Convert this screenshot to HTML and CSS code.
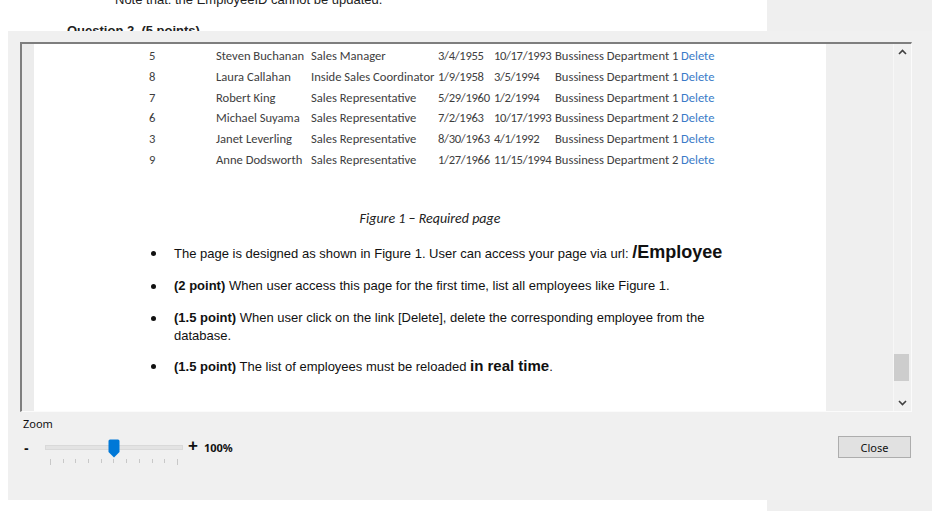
FILE: index.html
```html
<!DOCTYPE html>
<html>
<head>
<meta charset="utf-8">
<link rel="stylesheet" href="styles.css">
</head>
<body>
<div class="backdrop">
  <div class="doc">
    <p class="note">Note that: the EmployeeID cannot be updated.</p>
    <p class="question">Question 2. (5 points)</p>
  </div>
  <div class="side"></div>
</div>
<div class="dialog">
  <div class="viewer">
    <div class="gutter"></div>
    <div class="paper">
      <div class="emp-table">
        <div class="row"><span class="c-id">5</span><span class="c-name">Steven Buchanan</span><span class="c-title">Sales Manager</span><span class="c-birth">3/4/1955</span><span class="c-hire">10/17/1993</span><span class="c-dept">Bussiness Department 1</span><a class="c-del">Delete</a></div>
        <div class="row"><span class="c-id">8</span><span class="c-name">Laura Callahan</span><span class="c-title">Inside Sales Coordinator</span><span class="c-birth">1/9/1958</span><span class="c-hire">3/5/1994</span><span class="c-dept">Bussiness Department 1</span><a class="c-del">Delete</a></div>
        <div class="row"><span class="c-id">7</span><span class="c-name">Robert King</span><span class="c-title">Sales Representative</span><span class="c-birth">5/29/1960</span><span class="c-hire">1/2/1994</span><span class="c-dept">Bussiness Department 1</span><a class="c-del">Delete</a></div>
        <div class="row"><span class="c-id">6</span><span class="c-name">Michael Suyama</span><span class="c-title">Sales Representative</span><span class="c-birth">7/2/1963</span><span class="c-hire">10/17/1993</span><span class="c-dept">Bussiness Department 2</span><a class="c-del">Delete</a></div>
        <div class="row"><span class="c-id">3</span><span class="c-name">Janet Leverling</span><span class="c-title">Sales Representative</span><span class="c-birth">8/30/1963</span><span class="c-hire">4/1/1992</span><span class="c-dept">Bussiness Department 1</span><a class="c-del">Delete</a></div>
        <div class="row"><span class="c-id">9</span><span class="c-name">Anne Dodsworth</span><span class="c-title">Sales Representative</span><span class="c-birth">1/27/1966</span><span class="c-hire">11/15/1994</span><span class="c-dept">Bussiness Department 2</span><a class="c-del">Delete</a></div>
      </div>
      <p class="caption">Figure 1 – Required page</p>
      <ul class="reqs">
        <li class="first"><span class="dot"></span><span>The page is designed as shown in Figure 1. User can access your page via url: <b class="big">/Employee</b></span></li>
        <li><span class="dot"></span><span><b>(2 point)</b> When user access this page for the first time, list all employees like Figure 1.</span></li>
        <li class="third"><span class="dot"></span><span><b>(1.5 point)</b> When user click on the link [Delete], delete the corresponding employee from the database.</span></li>
        <li><span class="dot"></span><span><b>(1.5 point)</b> The list of employees must be reloaded <b class="mid">in real time</b>.</span></li>
      </ul>
    </div>
    <div class="gap"></div>
    <div class="scrollbar">
      <svg class="arrow" width="17" height="17" viewBox="0 0 17 17"><polyline points="5,10 8.5,6.5 12,10" fill="none" stroke="#404040" stroke-width="1.6"/></svg>
      <div class="track"><div class="thumb"></div></div>
      <svg class="arrow" width="17" height="17" viewBox="0 0 17 17"><polyline points="5,7 8.5,10.5 12,7" fill="none" stroke="#404040" stroke-width="1.6"/></svg>
    </div>
  </div>
  <div class="controls">
    <div class="zoom">
      <div class="zoom-label">Zoom</div>
      <div class="zoom-row">
        <span class="minus">-</span>
        <div class="slider">
          <div class="track-line"></div>
          <svg class="knob" width="12" height="19" viewBox="0 0 12 19"><path d="M0.5 2 Q0.5 0.5 2 0.5 H10 Q11.5 0.5 11.5 2 V13 L6 18.5 L0.5 13 Z" fill="#0078d7"/></svg>
          <div class="ticks"><i></i><i></i><i></i><i></i><i></i><i></i><i></i><i></i><i></i><i></i><i></i></div>
        </div>
        <span class="plus">+</span>
        <span class="pct">100%</span>
      </div>
    </div>
    <button class="close">Close</button>
  </div>
</div>
</body>
</html>
```

FILE: styles.css
```css
html, body {
  margin: 0;
  padding: 0;
}
body {
  width: 932px;
  height: 511px;
  overflow: hidden;
  position: relative;
  font-family: "Liberation Sans", Arial, sans-serif;
  color: #111;
}
.backdrop {
  display: flex;
  height: 511px;
}
.doc {
  width: 767px;
  background: #fff;
  overflow: hidden;
}
.side {
  flex: 1;
  background: #efefef;
}
.note {
  margin: -8px 0 0 115px;
  font-size: 13px;
  line-height: 15px;
  color: #222;
}
.question {
  margin: 16px 0 0 67px;
  font-size: 13px;
  line-height: 15px;
  font-weight: bold;
  color: #222;
}
.dialog {
  position: absolute;
  left: 8px;
  top: 31px;
  right: 0;
  bottom: 11px;
  background: #f0f0f0;
}
.viewer {
  box-sizing: border-box;
  margin: 11px 20px 0 12px;
  height: 370px;
  display: flex;
  border-top: 2px solid #7e7e7e;
  border-left: 2px solid #7e7e7e;
  border-bottom: 1px solid #fbfbfb;
  border-right: 1px solid #fbfbfb;
}
.gutter {
  width: 12px;
  background: #ececec;
}
.paper {
  width: 792px;
  background: #fff;
  overflow: hidden;
}
.gap {
  width: 67px;
  background: #efefef;
}
.scrollbar {
  width: 17px;
  display: flex;
  flex-direction: column;
  background: #f0f0f0;
  border-left: 1px solid #f7f7f7;
  box-sizing: border-box;
}
.arrow {
  display: block;
  flex: none;
}
.track {
  flex: 1;
  display: flex;
  flex-direction: column;
  justify-content: flex-end;
  padding-bottom: 13px;
}
.thumb {
  height: 27px;
  margin: 0 1px 0 0;
  background: #cdcdcd;
}
.emp-table {
  margin: 2px 0 0 113px;
  font-family: Carlito, Lato, "Open Sans", sans-serif;
  font-size: 12.6px;
  color: #3e3e3e;
}
.row {
  display: flex;
  height: 20.8px;
  line-height: 20.8px;
  white-space: nowrap;
}
.row span {
  flex: none;
  overflow: visible;
}
.c-id { width: 69px; padding-left: 2px; box-sizing: border-box; }
.c-name { width: 95px; }
.c-title { width: 127px; }
.c-birth { width: 56px; letter-spacing: -0.3px; }
.c-hire { width: 61px; letter-spacing: -0.35px; }
.c-dept { width: 126px; }
.c-del { color: #3a7bc8; }
.caption {
  margin: 40px 0 0;
  text-align: center;
  font-family: Carlito, Lato, "Open Sans", sans-serif;
  font-style: italic;
  font-size: 14px;
  line-height: 16px;
  color: #222;
}
.reqs {
  list-style: none;
  margin: 16px 0 0 0;
  padding: 0 80px 0 117px;
  font-size: 13px;
  line-height: 18px;
  color: #111;
}
.reqs li {
  display: flex;
  margin-bottom: 14px;
}
.reqs li.first {
  align-items: baseline;
  margin-bottom: 14px;
}
.reqs li.third {
  margin-bottom: 12px;
}
.dot {
  flex: none;
  width: 5px;
  height: 5px;
  margin: 7px 18px 0 0;
  border-radius: 50%;
  background: #111;
}
.reqs li.first .dot {
  align-self: center;
  margin-top: 2px;
}
.big {
  font-size: 18px;
}
.mid {
  font-size: 15px;
}
.controls {
  display: flex;
  justify-content: space-between;
  padding: 0 21px 0 15px;
}
.zoom-label {
  margin-top: 5px;
  font-family: "Noto Sans", "Open Sans", sans-serif;
  font-size: 11px;
  line-height: 14px;
  color: #111;
}
.zoom-row {
  display: flex;
  align-items: flex-start;
  margin-top: 8px;
  height: 30px;
}
.minus {
  width: 21px;
  padding-left: 1px;
  font-weight: bold;
  font-size: 14px;
  line-height: 18px;
}
.slider {
  position: relative;
  width: 138px;
  height: 30px;
}
.track-line {
  margin: 6px 0 0;
  height: 3px;
  background: #e3e3e3;
  border: 1px solid #d9d9d9;
}
.knob {
  position: absolute;
  left: 63px;
  top: 0;
}
.ticks {
  display: flex;
  justify-content: space-between;
  margin: 9px 5px 0;
}
.ticks i {
  display: block;
  width: 1px;
  height: 4px;
  background: #c8c8c8;
}
.ticks i:first-child, .ticks i:last-child {
  height: 6px;
}
.plus {
  margin-left: 5px;
  font-weight: bold;
  font-size: 17px;
  line-height: 14px;
}
.pct {
  margin-left: 6px;
  margin-top: 2px;
  font-family: "Noto Sans", "Open Sans", sans-serif;
  font-weight: bold;
  font-size: 11px;
  line-height: 14px;
}
.close {
  margin-top: 24px;
  width: 73px;
  height: 22px;
  padding: 0;
  background: #e1e1e1;
  border: 1px solid #adadad;
  font-family: "Noto Sans", "Open Sans", sans-serif;
  font-size: 11px;
  color: #111;
}
```
